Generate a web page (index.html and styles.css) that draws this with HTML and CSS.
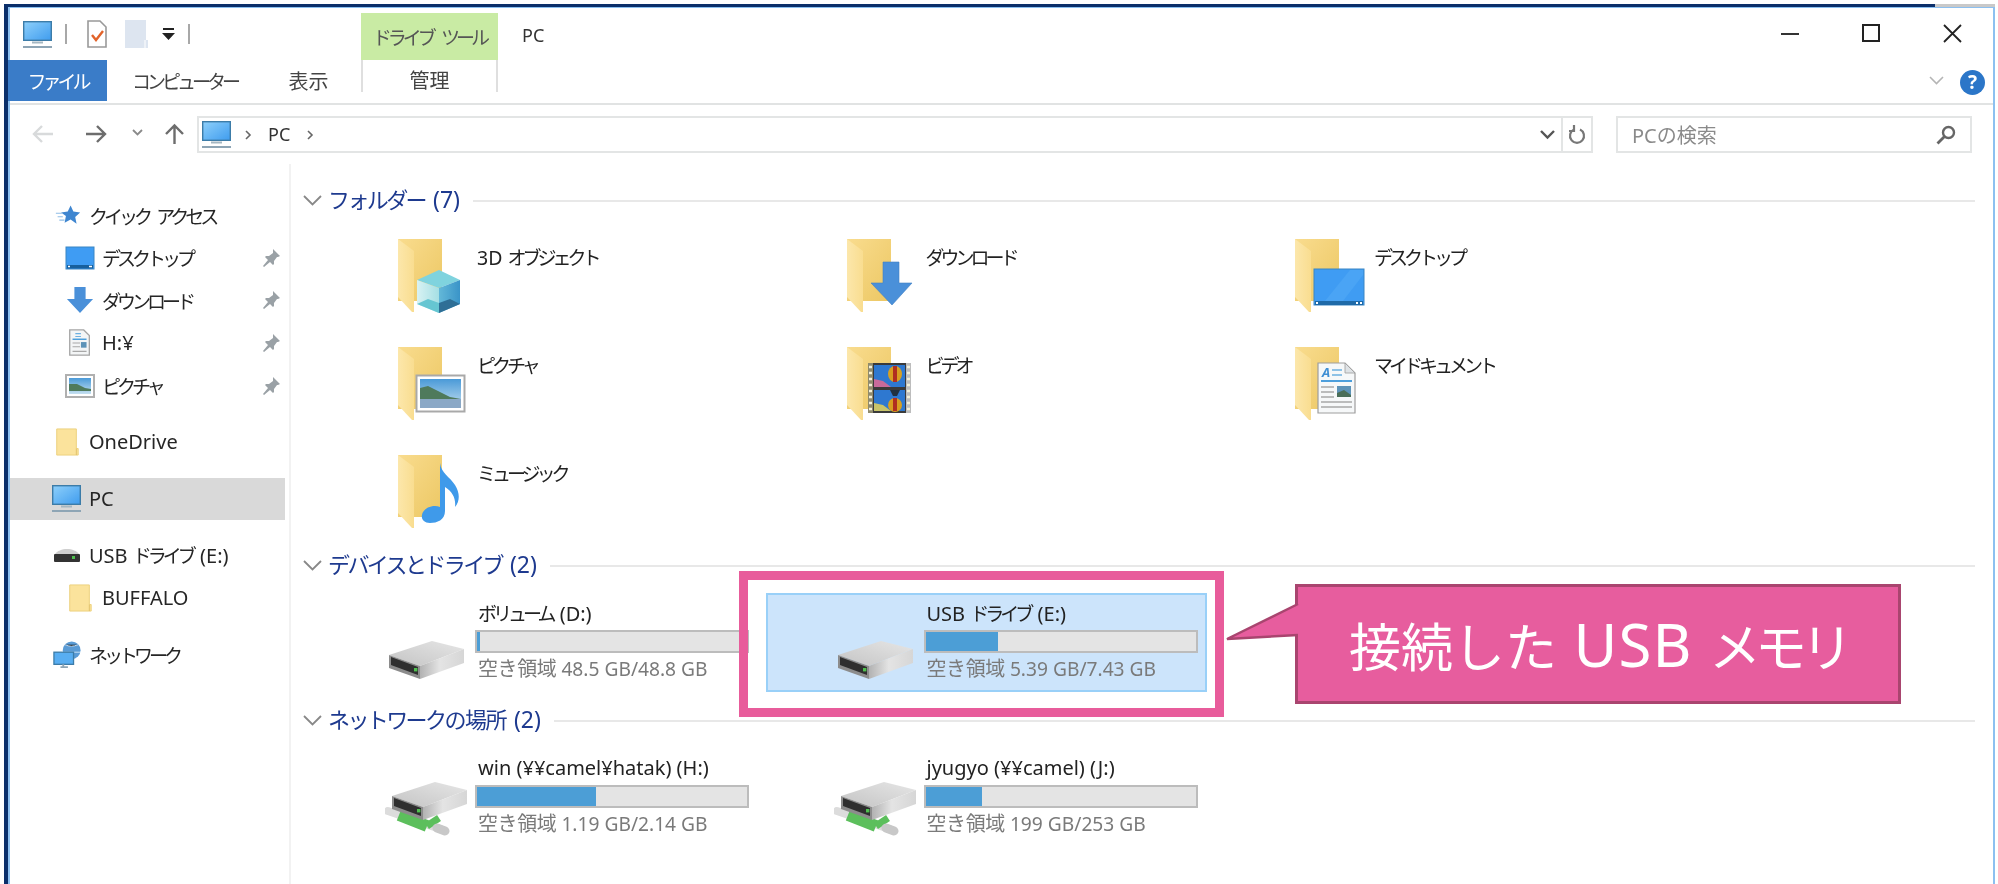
FILE: index.html
```html
<!DOCTYPE html>
<html lang="ja">
<head>
<meta charset="utf-8">
<title>PC</title>
<link rel="stylesheet" href="styles.css">
</head>
<body>
<svg class="defs" aria-hidden="true">
  <defs>
    <linearGradient id="gBack" x1="0" y1="0" x2="1" y2="1"><stop offset="0" stop-color="#f9dc8e"/><stop offset="1" stop-color="#ecc763"/></linearGradient>
    <linearGradient id="gFlap" x1="0" y1="0" x2="1" y2="0"><stop offset="0" stop-color="#fce7ab"/><stop offset="1" stop-color="#f9dd90"/></linearGradient>
    <linearGradient id="gScreen" x1="0" y1="0" x2="1" y2="1"><stop offset="0" stop-color="#8ed0fb"/><stop offset="1" stop-color="#3f9cee"/></linearGradient>
    <linearGradient id="gDriveTop" x1="0" y1="1" x2="1" y2="0"><stop offset="0" stop-color="#c4c4c4"/><stop offset="1" stop-color="#e6e6e6"/></linearGradient>
    <linearGradient id="gDriveSide" x1="0" y1="0" x2="1" y2="0"><stop offset="0" stop-color="#b2b2b2"/><stop offset=".45" stop-color="#e4e4e4"/><stop offset="1" stop-color="#d6d6d6"/></linearGradient>
    <linearGradient id="gCubeL" x1="0" y1="0" x2="1" y2="0"><stop offset="0" stop-color="#d8f2f3"/><stop offset="1" stop-color="#a5dfe4"/></linearGradient>
    <linearGradient id="gCubeR" x1="0" y1="0" x2="1" y2="0"><stop offset="0" stop-color="#63b8d8"/><stop offset="1" stop-color="#3a94c8"/></linearGradient>
    <linearGradient id="gSky" x1="0" y1="0" x2="0" y2="1"><stop offset="0" stop-color="#4a9ad8"/><stop offset="1" stop-color="#c5e0f0"/></linearGradient>

    <symbol id="i-folder" viewBox="0 0 70 76">
      <rect x="0" y="0" width="44" height="62" fill="url(#gBack)"/>
      <polygon points="0,0 16,12 16,73 14,73 0,58" fill="url(#gFlap)"/>
    </symbol>
    <symbol id="i-cube" viewBox="0 0 70 76">
      <polygon points="19,41 41,31 62,41 41,49" fill="#7fd3de"/>
      <polygon points="19,41 41,49 41,74 19,65" fill="url(#gCubeL)"/>
      <polygon points="41,49 62,41 62,65 41,74" fill="url(#gCubeR)"/>
      <polygon points="19,65 30,60 41,64 41,74" fill="#66c6d2"/>
      <polygon points="41,64 52,60 62,65 41,74" fill="#2f6f96"/>
    </symbol>
    <symbol id="i-arrow" viewBox="0 0 70 76">
      <polygon points="36,23 52,23 52,44 65,44 45,66 24,44 36,44" fill="#4a90d9" stroke="#3f80c4" stroke-width=".6"/>
    </symbol>
    <symbol id="i-desk" viewBox="0 0 70 76">
      <rect x="19" y="30" width="50" height="36" fill="#3f9cf3" stroke="#3a86c4"/>
      <polygon points="30,62 55,31 68,31 68,36 48,62" fill="#4aa4f5"/>
      <rect x="20" y="62" width="48" height="4" fill="#1f6aa8"/>
      <rect x="21" y="63" width="2" height="2" fill="#fff"/>
      <rect x="61" y="63" width="2" height="2" fill="#fff"/><rect x="65" y="63" width="2" height="2" fill="#fff"/>
    </symbol>
    <symbol id="i-pic" viewBox="0 0 70 76">
      <rect x="18.500" y="28.500" width="48" height="36" fill="#fff" stroke="#a9a9a9" stroke-width="2"/>
      <rect x="22" y="32" width="41" height="29" fill="url(#gSky)"/>
      <polygon points="22,41 30,39 40,44 52,50 63,52 63,53 22,53" fill="#4f7a5c"/>
      <rect x="22" y="52" width="41" height="9" fill="#8aa8c6"/>
    </symbol>
    <symbol id="i-film" viewBox="0 0 70 76">
      <rect x="21" y="16" width="43" height="50" fill="#3a3a3a"/>
      <rect x="21" y="16" width="5" height="50" fill="#8f8a6c"/>
      <rect x="59" y="16" width="5" height="50" fill="#bdbdbd"/>
      <rect x="27" y="18" width="31" height="22" fill="#2e78d0"/>
      <rect x="27" y="43" width="31" height="21" fill="#2e78d0"/>
      <polygon points="27,40 27,32 36,34 44,40" fill="#c86a9a"/>
      <polygon points="27,64 27,56 36,58 44,64" fill="#c8c46a"/>
      <ellipse cx="48" cy="27" rx="7" ry="8" fill="#d8a020"/>
      <rect x="46" y="19" width="4" height="16" fill="#b03020"/>
      <ellipse cx="48" cy="58" rx="7" ry="7" fill="#d8a020"/>
      <rect x="46" y="51" width="4" height="13" fill="#b03020"/>
      <path d="M43 43h10l-3 6h-4z" fill="#203040"/>
      <path d="M22 20h3M22 26h3M22 32h3M22 38h3M22 44h3M22 50h3M22 56h3M22 62h3M60 20h3M60 26h3M60 32h3M60 38h3M60 44h3M60 50h3M60 56h3M60 62h3" stroke="#f4f0d8" stroke-width="2.400"/>
    </symbol>
    <symbol id="i-doc" viewBox="0 0 70 76">
      <polygon points="23,16 50,16 60,26 60,66 23,66" fill="#f6f8f9" stroke="#9d9d9d" stroke-width="1.200"/>
      <polygon points="50,16 60,26 50,26" fill="#dfe3e6" stroke="#9d9d9d" stroke-width=".8"/>
      <text class="doc-a" x="27" y="30">A</text>
      <path d="M37 23h10M37 28h10" stroke="#6cb0e0" stroke-width="1.600"/>
      <path d="M26 34h31" stroke="#4d9fdc" stroke-width="2"/>
      <path d="M26 40h13M26 45h13M26 50h13M26 55h31M26 60h31" stroke="#a8a8a8" stroke-width="1.400"/>
      <rect x="42" y="39" width="14" height="11" fill="#5d93b8"/>
      <polygon points="42,46 49,43 56,48 56,50 42,50" fill="#4a6e58"/>
    </symbol>
    <symbol id="i-note" viewBox="0 0 70 76">
      <path d="M42 8c1 10 10 14 15 22 5 8 5 16 0 22 1-8-2-15-10-20v24c0 9-8 12-15 12-6 0-9-4-8-8 1-7 11-11 18-8z" fill="#3f9aea"/>
    </symbol>
    <symbol id="i-drive" viewBox="0 0 76 38">
      <polygon points="0,14 43,0 75,8 31,25" fill="url(#gDriveTop)"/>
      <polygon points="31,25 75,8 75,22 31,38" fill="url(#gDriveSide)"/>
      <polygon points="0,14 31,25 31,38 0,27" fill="#8c8c8c"/>
      <polygon points="2,16 29,26 29,34 2,24" fill="#2f2f2f"/>
      <rect x="25" y="27" width="3.400" height="3.400" fill="#4fc04f"/>
    </symbol>
    <symbol id="i-netdrive" viewBox="0 0 83 54">
      <path d="M3 29 L58 48" stroke="#dcdcdc" stroke-width="8" stroke-linecap="round"/>
      <path d="M14 33 L42 44" stroke="#5cbf5c" stroke-width="12"/>
      <path d="M42 44 L54 36" stroke="#5cbf5c" stroke-width="7"/>
      <path d="M52 46 L60 49" stroke="#c8c8c8" stroke-width="9" stroke-linecap="round"/>
      <use href="#i-drive" x="7" y="0" width="76" height="38"/>
    </symbol>
    <symbol id="i-pin" viewBox="0 0 18 18">
      <path d="M11 0l7 7-2 1-1 0-3 4 0 3-1 1-3-3-6 5-1-1 5-6-3-3 1-1 3 0 4-3 0-1z" fill="#9aa1a6"/>
    </symbol>
    <symbol id="i-mon" viewBox="0 0 29 27">
      <rect x=".7" y=".7" width="27.600" height="18.600" fill="url(#gScreen)" stroke="#3c7ca8" stroke-width="1.400"/>
      <rect x="9" y="20.500" width="11" height="2" fill="#a5b7c2"/>
      <rect x="0" y="25" width="29" height="2" fill="#8ea5b5"/>
    </symbol>
  </defs>
</svg>

<div class="window">
  <div class="topline"></div>
  <div class="window-inner">
    <header class="titlebar">
      <div class="qat">
        <svg class="qat-mon"><use href="#i-mon"/></svg>
        <span class="qat-sep"></span>
        <svg class="qat-doc" viewBox="0 0 20 28"><path d="M1 1h12l6 6v20H1z" fill="#fff" stroke="#999" stroke-width="1.600"/><path d="M5 15l4 5 7-9" fill="none" stroke="#e2632a" stroke-width="2.400"/></svg>
        <svg class="qat-blank" viewBox="0 0 23 28"><path d="M0 0h21v20h2v8H0z" fill="#dde5f0"/><path d="M20 20v8" stroke="#fff"/></svg>
        <svg class="qat-drop" viewBox="0 0 13 14"><path d="M1 1h11v2H1zM0 6h13l-6.500 7z" fill="#222"/></svg>
        <span class="qat-sep qat-sep-2"></span>
      </div>
      <div class="context-tab">ドライブ ツール</div>
      <div class="window-title">PC</div>
      <div class="controls">
        <svg class="ctl" viewBox="0 0 19 19"><path d="M0 10h18" stroke="#333" stroke-width="2"/></svg>
        <svg class="ctl" viewBox="0 0 19 19"><rect x="1" y="1" width="16" height="16" fill="none" stroke="#222" stroke-width="2"/></svg>
        <svg class="ctl" viewBox="0 0 19 19"><path d="M1 1l17 17M18 1L1 18" stroke="#222" stroke-width="1.800"/></svg>
      </div>
    </header>

    <nav class="tabs">
      <div class="tab tab-file">ファイル</div>
      <div class="tab tab-computer">コンピューター</div>
      <div class="tab tab-view">表示</div>
      <div class="tab tab-manage">管理</div>
      <svg class="collapse" viewBox="0 0 15 9"><path d="M1 1l6.500 6.500L14 1" fill="none" stroke="#b5b5b5" stroke-width="1.600"/></svg>
      <svg class="help" viewBox="0 0 25 25"><circle cx="12.500" cy="12.500" r="12.500" fill="#2b76c8"/><text class="help-q" x="12.500" y="19">?</text></svg>
    </nav>

    <div class="addressrow">
      <svg class="nav nav-back" viewBox="0 0 21 18"><path d="M10 1L2 9l8 8M2 9h19" fill="none" stroke="#d8dadb" stroke-width="2.400"/></svg>
      <svg class="nav nav-fwd" viewBox="0 0 21 18"><path d="M11 1l8 8-8 8M19 9H0" fill="none" stroke="#6d6d6d" stroke-width="2.400"/></svg>
      <svg class="nav nav-hist" viewBox="0 0 11 7"><path d="M1 1l4.500 4.500L10 1" fill="none" stroke="#8a8a8a" stroke-width="1.800"/></svg>
      <svg class="nav nav-up" viewBox="0 0 21 20"><path d="M2 10l8.500-8.500L19 10M10.500 2v18" fill="none" stroke="#6d6d6d" stroke-width="2.400"/></svg>
      <div class="address">
        <svg class="addr-mon"><use href="#i-mon"/></svg>
        <svg class="crumb-sep crumb-sep-1" viewBox="0 0 6 10"><path d="M1 1l4 4-4 4" fill="none" stroke="#666" stroke-width="1.600"/></svg>
        <span class="crumb">PC</span>
        <svg class="crumb-sep crumb-sep-2" viewBox="0 0 6 10"><path d="M1 1l4 4-4 4" fill="none" stroke="#666" stroke-width="1.600"/></svg>
        <svg class="addr-chev" viewBox="0 0 15 9"><path d="M1 1l6.500 6.500L14 1" fill="none" stroke="#555" stroke-width="2.400"/></svg>
        <div class="addr-refresh">
          <svg viewBox="0 0 18 20" class="refresh"><path d="M12 4.500A7 7 0 1 1 6 4.500M6 0v6H1" fill="none" stroke="#777" stroke-width="2.200"/></svg>
        </div>
      </div>
      <div class="search">
        <span>PCの検索</span>
        <svg class="search-icon" viewBox="0 0 20 20"><circle cx="12.500" cy="7.500" r="5.500" fill="none" stroke="#666" stroke-width="2.400"/><path d="M8.500 11.500L1.500 18.500" stroke="#666" stroke-width="2.800"/></svg>
      </div>
    </div>

    <div class="content">
      <aside class="sidebar">
        <div class="side-group">
          <div class="side-row">
            <svg class="side-icon side-star" viewBox="0 0 30 24"><path d="M18 1l3.200 7 7.800 1-5.700 5.200 1.600 7.800L18 17.200 11.100 21l1.500-7.800L7 9l7.700-1z" fill="#3f86d0"/><path d="M1 10h7M3 14h6M5 18h6" stroke="#8fbde6" stroke-width="1.400"/></svg>
            <span class="k-text">クイック アクセス</span>
          </div>
          <div class="side-row side-sub">
            <svg class="side-icon" viewBox="0 0 30 24"><rect x="1" y="1" width="28" height="22" fill="#3f9cf3" stroke="#3a86c4"/><rect x="2" y="19" width="26" height="3.500" fill="#175f9c"/><path d="M3 20.500h2M24 20.500h3" stroke="#fff" stroke-width="1.400"/></svg>
            <span class="k-text">デスクトップ</span>
            <svg class="pin"><use href="#i-pin"/></svg>
          </div>
          <div class="side-row side-sub">
            <svg class="side-icon" viewBox="0 0 30 30"><polygon points="9,1 21,1 21,14 29,14 15,29 1,14 9,14" fill="#4a90d9"/></svg>
            <span class="k-text">ダウンロード</span>
            <svg class="pin"><use href="#i-pin"/></svg>
          </div>
          <div class="side-row side-sub">
            <svg class="side-icon" viewBox="0 0 30 30"><polygon points="4,1 19,1 25,7 25,28 4,28" fill="#f3f5f6" stroke="#a5a5a5" stroke-width="1.400"/><path d="M7 11h15" stroke="#4d9fdc" stroke-width="1.600"/><path d="M10 5h6M10 8h6" stroke="#6cb0e0" stroke-width="1.200"/><path d="M7 15h8M7 19h8M7 24h15" stroke="#a8a8a8" stroke-width="1.200"/><rect x="16" y="14" width="6" height="6" fill="#5d93b8"/></svg>
            <span class="latin">H:¥</span>
            <svg class="pin"><use href="#i-pin"/></svg>
          </div>
          <div class="side-row side-sub">
            <svg class="side-icon" viewBox="0 0 30 24"><rect x="1" y="1" width="28" height="22" fill="#fff" stroke="#b0b0b0" stroke-width="2"/><rect x="4" y="4" width="22" height="16" fill="url(#gSky)"/><polygon points="4,10 12,10 20,14 26,15 26,17 4,17" fill="#4f7a5c"/></svg>
            <span class="k-text">ピクチャ</span>
            <svg class="pin"><use href="#i-pin"/></svg>
          </div>
        </div>
        <div class="side-group">
          <div class="side-row">
            <svg class="side-icon" viewBox="0 0 30 30"><path d="M4 1h21v21h2v7H4z" fill="#fbe39c" stroke="#ecd07a"/><path d="M25 22v7" stroke="#e0c069"/></svg>
            <span class="latin">OneDrive</span>
          </div>
        </div>
        <div class="side-group">
          <div class="side-row side-current">
            <svg class="side-icon side-mon"><use href="#i-mon"/></svg>
            <span class="latin">PC</span>
          </div>
        </div>
        <div class="side-group">
          <div class="side-row">
            <svg class="side-icon" viewBox="0 0 30 16"><path d="M3 7c2-3 7-5 12-5s10 2 12 5z" fill="#cfcfcf"/><rect x="2" y="7" width="26" height="8" rx="1" fill="#333"/><rect x="20" y="9" width="3" height="3" fill="#4fc04f"/></svg>
            <span class="latin">USB <span class="k">ドライブ</span> (E:)</span>
          </div>
          <div class="side-row side-sub">
            <svg class="side-icon" viewBox="0 0 30 30"><path d="M4 1h21v21h2v7H4z" fill="#fbe39c" stroke="#ecd07a"/><path d="M25 22v7" stroke="#e0c069"/></svg>
            <span class="latin">BUFFALO</span>
          </div>
        </div>
        <div class="side-group">
          <div class="side-row">
            <svg class="side-icon" viewBox="0 0 30 30"><circle cx="20" cy="10" r="9.500" fill="#5a9bd5"/><path d="M13 4c4 2 9 2 14 0M11 12h18" stroke="#cfe4f6" stroke-width="1"/><rect x="1" y="12" width="21" height="13" fill="#58aef2" stroke="#3c7ca8" stroke-width="1.400"/><path d="M8 28h8M11 25v3" stroke="#8ea5b5" stroke-width="2"/></svg>
            <span class="k-text">ネットワーク</span>
          </div>
        </div>
      </aside>

      <main class="main">
        <section>
          <div class="group-head">
            <svg class="group-chev" viewBox="0 0 19 11"><path d="M1 1l8.500 8.500L18 1" fill="none" stroke="#888" stroke-width="1.800"/></svg>
            <h2 class="group-title"><span class="k">フォルダー</span> (7)</h2>
            <span class="group-line"></span>
          </div>
          <div class="folders">
            <div class="folder"><svg class="folder-icon"><use href="#i-folder"/><use href="#i-cube"/></svg><span class="folder-name">3D <span class="k">オブジェクト</span></span></div>
            <div class="folder"><svg class="folder-icon"><use href="#i-folder"/><use href="#i-arrow"/></svg><span class="folder-name k">ダウンロード</span></div>
            <div class="folder"><svg class="folder-icon"><use href="#i-folder"/><use href="#i-desk"/></svg><span class="folder-name k">デスクトップ</span></div>
            <div class="folder"><svg class="folder-icon"><use href="#i-folder"/><use href="#i-pic"/></svg><span class="folder-name k">ピクチャ</span></div>
            <div class="folder"><svg class="folder-icon"><use href="#i-folder"/><use href="#i-film"/></svg><span class="folder-name k">ビデオ</span></div>
            <div class="folder"><svg class="folder-icon"><use href="#i-folder"/><use href="#i-doc"/></svg><span class="folder-name k">マイドキュメント</span></div>
            <div class="folder"><svg class="folder-icon"><use href="#i-folder"/><use href="#i-note"/></svg><span class="folder-name k">ミュージック</span></div>
          </div>
        </section>

        <section class="section-after">
          <div class="group-head">
            <svg class="group-chev" viewBox="0 0 19 11"><path d="M1 1l8.500 8.500L18 1" fill="none" stroke="#888" stroke-width="1.800"/></svg>
            <h2 class="group-title"><span class="k">デバイスとドライブ</span> (2)</h2>
            <span class="group-line"></span>
          </div>
          <div class="drives">
            <div class="drive">
              <svg class="drive-icon"><use href="#i-drive"/></svg>
              <div class="drive-info">
                <div class="drive-name"><span class="k">ボリューム</span> (D:)</div>
                <div class="bar"><div class="bar-fill" style="width:1%"></div></div>
                <div class="drive-free"><span class="kj">空き領域</span> 48.5 GB/48.8 GB</div>
              </div>
            </div>
            <div class="drive drive-selected">
              <svg class="drive-icon"><use href="#i-drive"/></svg>
              <div class="drive-info">
                <div class="drive-name">USB <span class="k">ドライブ</span> (E:)</div>
                <div class="bar"><div class="bar-fill" style="width:27%"></div></div>
                <div class="drive-free"><span class="kj">空き領域</span> 5.39 GB/7.43 GB</div>
              </div>
            </div>
          </div>
        </section>

        <section class="section-after">
          <div class="group-head">
            <svg class="group-chev" viewBox="0 0 19 11"><path d="M1 1l8.500 8.500L18 1" fill="none" stroke="#888" stroke-width="1.800"/></svg>
            <h2 class="group-title"><span class="k">ネットワーク</span><span class="kj-head">の場所</span> (2)</h2>
            <span class="group-line"></span>
          </div>
          <div class="drives">
            <div class="drive">
              <svg class="netdrive-icon"><use href="#i-netdrive"/></svg>
              <div class="drive-info">
                <div class="drive-name">win (¥¥camel¥hatak) (H:)</div>
                <div class="bar"><div class="bar-fill" style="width:44%"></div></div>
                <div class="drive-free"><span class="kj">空き領域</span> 1.19 GB/2.14 GB</div>
              </div>
            </div>
            <div class="drive">
              <svg class="netdrive-icon"><use href="#i-netdrive"/></svg>
              <div class="drive-info">
                <div class="drive-name">jyugyo (¥¥camel) (J:)</div>
                <div class="bar"><div class="bar-fill" style="width:21%"></div></div>
                <div class="drive-free"><span class="kj">空き領域</span> 199 GB/253 GB</div>
              </div>
            </div>
          </div>
        </section>
      </main>
    </div>
  </div>
</div>

<div class="highlight"></div>
<div class="callout">
  <svg class="callout-tail" viewBox="0 0 73 40"><polygon points="72,1 1,36 72,32" fill="#e75d9e"/><path d="M72 1L1 36l71-4" fill="none" stroke="#a9456f" stroke-width="2.500"/></svg>
  <span class="callout-text">接続した <span class="callout-latin">USB</span> <span class="callout-kana">メモリ</span></span>
</div>
</body>
</html>
```

FILE: styles.css
```css
* { box-sizing: border-box; }
html, body { margin: 0; padding: 0; height: 884px; overflow: hidden; background: #fff; }
body {
  position: relative;
  font-family: "Noto Sans", "Noto Sans CJK JP", sans-serif;
  font-size: 19.500px;
  color: #222;
}
.defs { position: absolute; width: 0; height: 0; }
svg { display: block; flex: none; overflow: visible; }
text { font-family: "Noto Sans", sans-serif; }

.k, .k-text { font-size: 19px; letter-spacing: -4px; word-spacing: 7px; font-family: "Noto Sans CJK JP", sans-serif; }
.k { padding-right: 2px; }
.kj { font-size: 20px; letter-spacing: -.4px; font-family: "Noto Sans CJK JP", sans-serif; }

.window { margin: 4px 3px 0 4px; height: 880px; border-left: 4px solid #0b2f6a; filter: blur(.45px); }
.topline { height: 3px; margin-left: -4px; background: linear-gradient(90deg, #0b2f6a 97%, #c9c9c9 97%); }
.window-inner {
  height: 877px;
  border-top: 1px solid #8cc0f0;
  border-left: 2px solid #8cc0f0;
  border-right: 2px solid #8cc0f0;
  display: flex;
  flex-direction: column;
}

/* title bar */
.titlebar { height: 52px; display: flex; align-items: flex-start; }
.qat { display: flex; align-items: center; height: 28px; margin-top: 12px; padding-left: 13px; width: 351px; }
.qat-mon { width: 29px; height: 27px; }
.qat-sep { width: 2px; height: 20px; background: #a8a8a8; margin: 0 20px 0 13px; }
.qat-doc { width: 20px; height: 28px; }
.qat-blank { width: 23px; height: 28px; margin-left: 18px; }
.qat-drop { width: 13px; height: 14px; margin-left: 14px; }
.qat-sep-2 { margin: 0 0 0 13px; }
.context-tab {
  margin-top: 5px;
  width: 137px;
  height: 47px;
  background: #c9eba4;
  color: #555;
  font-family: "Noto Sans CJK JP", sans-serif;
  font-size: 19px;
  letter-spacing: -4px;
  word-spacing: 8px;
  display: flex;
  align-items: center;
  justify-content: center;
}
.window-title { margin: 14px 0 0 24px; font-size: 18px; line-height: 26px; color: #333; }
.controls { margin: 16px 31px 0 auto; display: flex; gap: 62px; }
.ctl { width: 19px; height: 19px; }

/* ribbon tabs */
.tabs { height: 45px; border-bottom: 2px solid #e1e3e3; display: flex; align-items: flex-start; font-family: "Noto Sans CJK JP", sans-serif; position: relative; }
.tab { height: 41px; display: flex; align-items: center; justify-content: center; color: #444; }
.tab-file { width: 99px; margin-left: -2px; background: #3a7cc8; color: #fff; font-size: 19px; letter-spacing: -4px; }
.tab-computer { width: 155px; font-size: 19px; letter-spacing: -4px; }
.tab-view { width: 93px; font-size: 20px; }
.tab-manage { width: 137px; height: 32px; margin-left: 6px; border-left: 2px solid #dfdfdf; border-right: 2px solid #dfdfdf; font-size: 20px; padding-top: 6px; }
.collapse { width: 15px; height: 9px; margin: 16px 0 0 auto; }
.help { width: 25px; height: 25px; margin: 10px 8px 0 16px; }
.help-q { font-size: 19px; font-weight: 700; fill: #fff; text-anchor: middle; }

/* address bar */
.addressrow { height: 59px; padding: 11px 21px 0 22px; display: flex; align-items: flex-start; }
.nav-back, .nav-fwd { width: 21px; height: 18px; margin-top: 9px; }
.nav-fwd { margin-left: 33px; }
.nav-hist { width: 11px; height: 7px; margin: 13px 0 0 25px; }
.nav-up { width: 21px; height: 20px; margin: 8px 0 0 21px; }
.address {
  flex: 1;
  height: 37px;
  margin-left: 12px;
  border: 2px solid #e3e5e5;
  display: flex;
  align-items: center;
  padding-left: 3px;
}
.addr-mon { width: 29px; height: 27px; }
.crumb-sep { width: 6px; height: 10px; }
.crumb-sep-1 { margin: 0 17px 0 14px; }
.crumb-sep-2 { margin-left: 17px; }
.crumb { color: #333; font-size: 18px; line-height: 26px; margin-top: -2px; }
.addr-chev { width: 15px; height: 9px; margin-left: auto; }
.addr-refresh { width: 30px; height: 33px; margin-left: 6px; border-left: 2px solid #e3e5e5; display: flex; align-items: center; justify-content: center; }
.refresh { width: 18px; height: 20px; }
.search {
  width: 356px;
  height: 37px;
  margin-left: 23px;
  border: 2px solid #e3e5e5;
  padding: 0 14px;
  display: flex;
  align-items: center;
  justify-content: space-between;
  color: #8a8a8a;
  font-size: 20px;
}
.search-icon { width: 20px; height: 20px; }

/* body */
.content { flex: 1; display: flex; min-height: 0; }
.sidebar { width: 281px; padding-top: 30px; border-right: 2px solid #f2f2f2; padding-right: 4px; }
.side-group { margin-bottom: 14px; }
.side-row { height: 42.600px; display: flex; align-items: center; padding-left: 42px; color: #262626; }
.side-sub { padding-left: 55px; }
.side-current { background: #d9d9d9; }
.side-icon { width: 30px; height: 28px; margin-right: 7px; }
.side-star { width: 26px; height: 22px; margin: 0 8px 0 3px; }
.side-mon { width: 29px; height: 27px; margin-right: 8px; }
.latin { font-size: 20px; line-height: 26px; }
.pin { width: 18px; height: 18px; margin-left: auto; margin-right: 5px; }

/* main */
.main { flex: 1; padding: 21px 18px 0 12px; }
.group-head { height: 30px; display: flex; align-items: center; }
.group-chev { width: 19px; height: 11px; margin-right: 6px; }
.group-title { margin: -3px 13px 0 0; font-size: 23px; font-weight: 400; color: #1e3a8f; white-space: nowrap; word-spacing: 2px; }
.group-title .k { font-size: 22px; letter-spacing: -2.600px; padding-right: 0; }
.kj-head { font-size: 22px; font-family: "Noto Sans CJK JP", sans-serif; letter-spacing: -1.500px; }
.group-line { flex: 1; height: 2px; background: #e8e8e8; margin-top: 2px; }
.section-after { margin-top: 13px; }

.folders {
  margin: 24px 0 0 15px;
  display: grid;
  grid-template-columns: repeat(3, 448.500px);
  grid-auto-rows: 80px;
  row-gap: 28px;
  padding-bottom: 2px;
}
.folder { display: flex; align-items: flex-start; padding-left: 80px; }
.folder-icon { width: 70px; height: 76px; }
.folder-name { margin: 5px 0 0 9px; line-height: 26px; white-space: nowrap; color: #222; }

.drives { margin: 13px 0 0 14px; display: grid; grid-template-columns: repeat(2, 448.500px); }
.drive { width: 441px; height: 99px; border: 2px solid transparent; display: flex; align-items: flex-start; padding-left: 70px; }
.drive-selected { background: #cce4fb; border-color: #99d0f8; }
.drive-icon { width: 76px; height: 38px; margin: 46px 10px 0 0; }
.netdrive-icon { width: 83px; height: 54px; margin: 32px 7px 0 -4px; }
.drive-info { width: 274px; padding-top: 6px; }
.drive-name { height: 24px; line-height: 24px; padding-left: 3px; margin-bottom: 5px; color: #222; white-space: nowrap; font-size: 20px; }
.bar { height: 23px; border: 2px solid #bcbcbc; background: #e4e4e4; }
.bar-fill { height: 100%; background: #4c9ed6; }
.drive-free { height: 24px; line-height: 24px; margin-top: 3px; padding-left: 3px; color: #7a7a7a; white-space: nowrap; font-size: 19.200px; }

/* annotation overlays */
.highlight { position: absolute; left: 739px; top: 571px; width: 485px; height: 146px; border: 9px solid #e85c9b; }
.callout {
  position: absolute;
  left: 1295px;
  top: 584px;
  width: 606px;
  height: 120px;
  background: #e75d9e;
  border: 3px solid #a9456f;
  display: flex;
  align-items: center;
  justify-content: center;
}
.callout-tail { position: absolute; left: -72px; top: 16px; width: 73px; height: 40px; }
.callout-text {
  color: #fff;
  font-family: "Noto Sans CJK JP", sans-serif;
  font-size: 52px;
  line-height: 60px;
  white-space: nowrap;
  word-spacing: 5px;
}
.callout-latin { font-family: "Noto Sans", sans-serif; font-size: 60px; letter-spacing: 1px; }
.callout-kana { letter-spacing: -6px; }
.doc-a { font-size: 13px; font-style: italic; font-weight: 700; fill: #3f8fd4; }
```
